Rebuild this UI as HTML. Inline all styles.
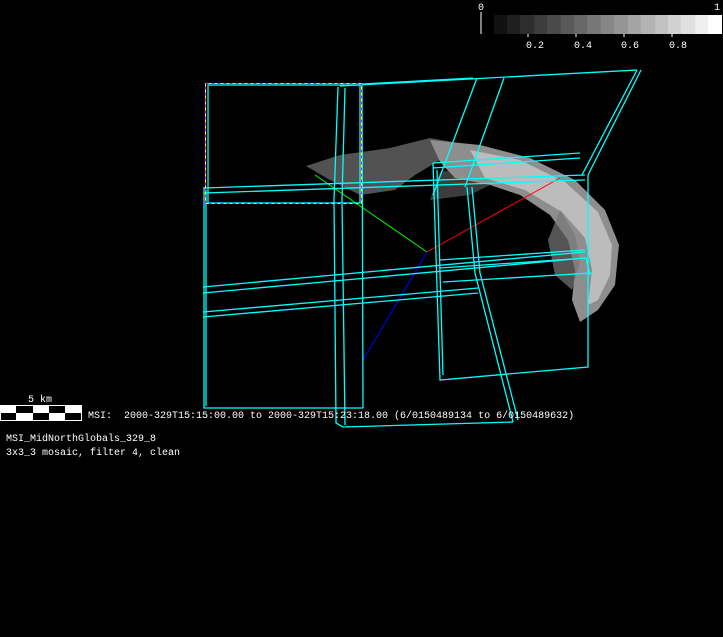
<!DOCTYPE html>
<html><head><meta charset="utf-8"><style>
html,body{margin:0;padding:0;background:#000;width:723px;height:637px;overflow:hidden}
svg{display:block}
text{font-family:"Liberation Mono",monospace;font-size:10px;fill:#fff}
</style></head><body>
<svg width="723" height="637" viewBox="0 0 723 637">
<rect width="723" height="637" fill="#000"/>
<g>
<rect x="494" y="15" width="14" height="19" fill="#111"/>
<rect x="507" y="15" width="14" height="19" fill="#1f1f1f"/>
<rect x="520" y="15" width="14" height="19" fill="#2d2d2d"/>
<rect x="534" y="15" width="14" height="19" fill="#3c3c3c"/>
<rect x="547" y="15" width="14" height="19" fill="#4a4a4a"/>
<rect x="561" y="15" width="14" height="19" fill="#595959"/>
<rect x="574" y="15" width="14" height="19" fill="#686868"/>
<rect x="587" y="15" width="14" height="19" fill="#777"/>
<rect x="601" y="15" width="14" height="19" fill="#868686"/>
<rect x="614" y="15" width="14" height="19" fill="#959595"/>
<rect x="628" y="15" width="14" height="19" fill="#a4a4a4"/>
<rect x="641" y="15" width="14" height="19" fill="#b3b3b3"/>
<rect x="655" y="15" width="14" height="19" fill="#c2c2c2"/>
<rect x="668" y="15" width="14" height="19" fill="#d1d1d1"/>
<rect x="681" y="15" width="14" height="19" fill="#e0e0e0"/>
<rect x="695" y="15" width="14" height="19" fill="#efefef"/>
<rect x="708" y="15" width="14" height="19" fill="#fff"/>
<line x1="481" y1="12" x2="481" y2="34" stroke="#fff"/>
<line x1="528" y1="34" x2="528" y2="37" stroke="#fff"/>
<line x1="576" y1="34" x2="576" y2="37" stroke="#fff"/>
<line x1="624" y1="34" x2="624" y2="37" stroke="#fff"/>
<line x1="672" y1="34" x2="672" y2="37" stroke="#fff"/>
<text x="478" y="10">0</text><text x="714" y="10">1</text>
<text x="526" y="48">0.2</text><text x="574" y="48">0.4</text><text x="621" y="48">0.6</text><text x="669" y="48">0.8</text>
</g>
<g>
<path d="M306,166 L340,155 L390,148 L430,138 L470,145 L440,160 L415,175 L395,190 L360,195 L330,180 Z" fill="#666" opacity="0.8"/>
<path d="M440,172 L480,165 L500,180 L470,195 L430,200 Z" fill="#555" opacity="0.7"/>
<path d="M430,140 L480,145 L530,158 L575,180 L605,210 L619,245 L615,285 L598,310 L580,322 L572,300 L575,270 L568,240 L550,215 L520,195 L490,185 L455,178 L440,162 Z" fill="#8e8e8e"/>
<path d="M470,150 L520,160 L565,182 L598,212 L612,245 L610,275 L598,300 L588,305 L592,270 L585,238 L562,212 L525,190 L485,178 Z" fill="#c4c4c4" opacity="0.85"/>
<path d="M560,210 L575,235 L580,262 L572,290 L555,275 L548,240 Z" fill="#777" opacity="0.7"/>
</g>
<line x1="315" y1="175" x2="427" y2="252" stroke="#0f0"/>
<line x1="427" y1="252" x2="560" y2="178" stroke="#f00"/>
<line x1="427" y1="252" x2="363" y2="360" stroke="#00f"/>
<g fill="none" stroke="#0ff" stroke-width="1.3">
<rect x="208" y="85" width="152" height="118"/>
<polyline points="204,188 585,175"/>
<polyline points="204,193 585,180"/>
<polyline points="204,187 204,408 363,408"/>
<polyline points="206,190 206,406"/>
<polyline points="362,84 363,408"/>
<polyline points="338,87 334,200 336,423 343,427 513,422"/>
<polyline points="345,88 342,200 345,425"/>
<polyline points="340,86 637,70"/>
<polyline points="362,84 473,78"/>
<polyline points="477,78 433,195"/>
<polyline points="504,78 465,187"/>
<polyline points="637,70 582,175"/>
<polyline points="641,70 588,175"/>
<polyline points="433,163 580,153"/>
<polyline points="433,168 580,158"/>
<polyline points="433,163 440,380 588,367 588,175"/>
<polyline points="437,170 443,375"/>
<polyline points="467,187 475,273 513,422"/>
<polyline points="472,187 480,273 518,420"/>
<polyline points="203,287 585,252"/>
<polyline points="203,293 585,258"/>
<polyline points="203,317 478,293"/>
<polyline points="203,312 478,288"/>
<polyline points="440,260 585,250"/>
<polyline points="443,282 592,273"/>
<polyline points="440,268 586,258 590,275"/>
</g>
<rect x="205.5" y="83.5" width="156" height="120" fill="none" stroke="#f0f" stroke-dasharray="3,3"/>
<rect x="205.5" y="83.5" width="156" height="120" fill="none" stroke="#ff0" stroke-dasharray="3,3" stroke-dashoffset="3"/>
<rect x="0" y="405" width="82" height="16" fill="#fff"/>
<rect x="16" y="406" width="17" height="7" fill="#000"/>
<rect x="49" y="406" width="16" height="7" fill="#000"/>
<rect x="1" y="413" width="15" height="7" fill="#000"/>
<rect x="33" y="413" width="16" height="7" fill="#000"/>
<rect x="65" y="413" width="16" height="7" fill="#000"/>
<text x="28" y="402">5 km</text>
<text x="88" y="418" xml:space="preserve">MSI:  2000-329T15:15:00.00 to 2000-329T15:23:18.00 (6/0150489134 to 6/0150489632)</text>
<text x="6" y="441">MSI_MidNorthGlobals_329_8</text>
<text x="6" y="455">3x3_3 mosaic, filter 4, clean</text>
</svg>
</body></html>
